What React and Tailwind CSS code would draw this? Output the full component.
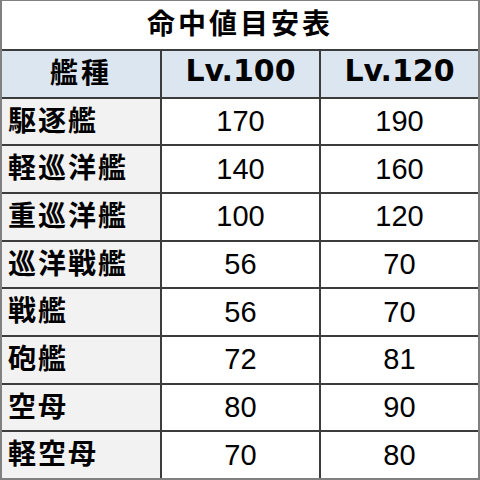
const JP = { fontFamily: '"Noto Sans CJK JP", "Noto Sans", sans-serif' }

const ROWS = [
    ['駆逐艦', 170, 190],
    ['軽巡洋艦', 140, 160],
    ['重巡洋艦', 100, 120],
    ['巡洋戦艦', 56, 70],
    ['戦艦', 56, 70],
    ['砲艦', 72, 81],
    ['空母', 80, 90],
    ['軽空母', 70, 80],
]

export default function App() {
    return (
        <div className="w-[480px] h-[480px] bg-white flex flex-col border-t border-x-2 border-b-2 border-[#808080] text-black leading-none">
            <div className="h-[50px] shrink-0 flex items-center justify-center pb-[6px] text-[28px] font-bold tracking-[3px] border-b-2 border-[#3c3c3c]" style={JP}>
                命中値目安表
            </div>

            <div className="flex-1 basis-0 min-h-0 flex bg-[#dce6f1] border-b-2 border-[#3c3c3c]">
                <div className="w-[158px] flex items-center justify-center pb-[6px] text-[28px] font-bold tracking-[3px]" style={JP}>艦種</div>
                <div className="flex-1 flex items-center justify-center pb-[6px] border-l-2 border-[#3c3c3c] text-[30px] font-bold font-['DejaVu_Sans',sans-serif]">Lv.100</div>
                <div className="flex-1 flex items-center justify-center pb-[6px] border-l-2 border-[#3c3c3c] text-[30px] font-bold font-['DejaVu_Sans',sans-serif]">Lv.120</div>
            </div>

            {ROWS.map(([name, a, b], i) => (
                <div key={name} className={`flex-1 basis-0 min-h-0 flex ${i < ROWS.length - 1 ? 'border-b-2 border-[#3c3c3c]' : ''}`}>
                    <div className="w-[158px] bg-[#f2f2f2] flex items-center pl-[6px] pb-[6px] text-[28px] font-bold tracking-[2px]" style={JP}>{name}</div>
                    <div className="flex-1 flex items-center justify-center border-l-2 border-[#3c3c3c] text-[29px] font-['Liberation_Sans',Arial,sans-serif]">{a}</div>
                    <div className="flex-1 flex items-center justify-center border-l-2 border-[#3c3c3c] text-[29px] font-['Liberation_Sans',Arial,sans-serif]">{b}</div>
                </div>
            ))}
        </div>
    )
}
